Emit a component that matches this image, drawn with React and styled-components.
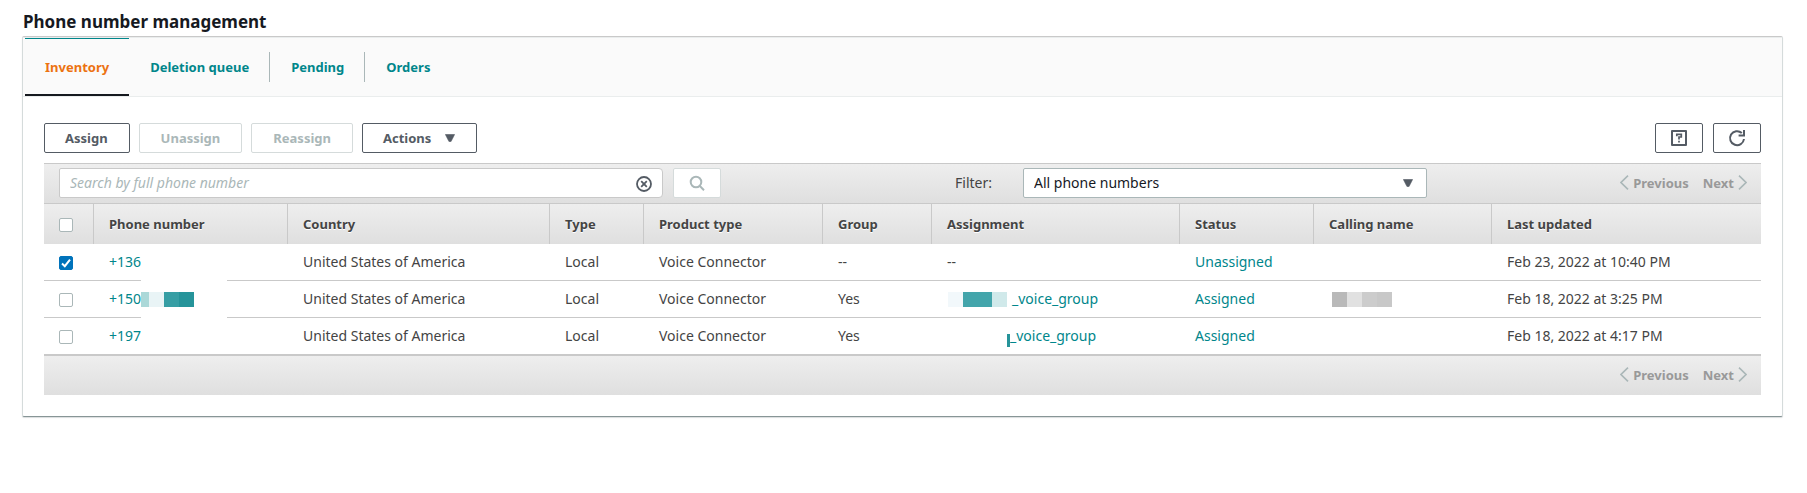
import React, { useState } from 'react';
import styled, { createGlobalStyle, css } from 'styled-components';

const color = {
  ink: '#16191f',
  text: '#444444',
  slate: '#545b64',
  teal: '#00868b',
  orange: '#ec7211',
  muted: '#aab7b8',
  faint: '#d5dbdb',
  line: '#c9c9c9',
  disabled: '#999999',
};

const GlobalStyle = createGlobalStyle`
  *, *::before, *::after { box-sizing: border-box; }
  body { margin: 0; background: #ffffff; }
  body, button, input, select {
    font-family: 'Noto Sans', 'Open Sans', sans-serif;
    font-size: 14px;
    line-height: 20px;
    color: ${color.text};
  }
`;

const Page = styled.main`
  padding: 10px 24px 40px 22px;
`;

const Title = styled.h1`
  margin: 0 0 2px;
  padding-left: 1px;
  font-size: 17px;
  line-height: 24px;
  font-weight: 700;
  color: ${color.ink};
`;

const Card = styled.section`
  border: 1px solid ${color.faint};
  border-top-color: ${color.line};
  border-bottom-color: #879596;
  box-shadow: 0 1px 1px rgba(0, 28, 36, 0.15);
  border-radius: 2px;
`;

const TabBar = styled.nav`
  display: flex;
  height: 60px;
  padding-left: 2px;
  background: #fafafa;
  border-top: 1px solid #eaeded;
  border-bottom: 1px solid #eaeded;
`;

const Tab = styled.a`
  position: relative;
  display: flex;
  align-items: center;
  padding: 0 21px;
  font-size: 13px;
  font-weight: 700;
  text-decoration: none;
  color: ${color.teal};
  & + &::before {
    content: '';
    position: absolute;
    left: -1px;
    top: 14px;
    width: 1px;
    height: 30px;
    background: ${color.muted};
  }
  ${(p) =>
    p.$active &&
    css`
      padding: 0 20px;
      color: ${color.orange};
      border-top: 1px solid ${color.teal};
      border-bottom: 2px solid ${color.ink};
    `}
`;

const Content = styled.div`
  padding: 26px 21px 21px;
`;

const ButtonRow = styled.div`
  display: flex;
  gap: 9px;
  margin-bottom: 10px;
`;

const Button = styled.button`
  display: inline-flex;
  align-items: center;
  justify-content: center;
  height: 30px;
  padding: 0 21px 0 20px;
  font-size: 13px;
  font-weight: 700;
  color: ${color.slate};
  background: #ffffff;
  border: 1px solid ${color.slate};
  border-radius: 2px;
  &:disabled {
    padding: 0 21px;
    color: ${color.muted};
    border-color: ${color.faint};
  }
  svg { margin-left: 14px; }
`;

const IconButton = styled(Button)`
  flex: none;
  width: 48px;
  &, &:disabled { padding: 0; }
  svg { margin: 0; }
`;

const RightButtons = styled.div`
  display: flex;
  gap: 10px;
  margin-left: auto;
`;

const bar = css`
  background: linear-gradient(#eeeeee, #dfdfdf);
`;

const Toolbar = styled.div`
  ${bar}
  display: flex;
  align-items: center;
  height: 40px;
  padding: 0 14px 2px 15px;
  border-top: 1px solid ${color.line};
`;

const Search = styled.form`
  display: flex;
  gap: 10px;
  flex: 0 1 662px;
`;

const SearchField = styled.div`
  position: relative;
  flex: 1;
`;

const SearchInput = styled.input`
  width: 100%;
  height: 30px;
  padding: 0 36px 0 10px;
  background: #ffffff;
  border: 1px solid ${color.line};
  border-radius: 2px 4px 4px 2px;
  &::placeholder {
    font-style: italic;
    color: ${color.muted};
    opacity: 1;
  }
`;

const ClearButton = styled.button`
  position: absolute;
  right: 11px;
  top: 8px;
  display: flex;
  padding: 0;
  border: 0;
  background: none;
`;

const Filter = styled.div`
  display: flex;
  align-items: center;
  flex: 0 1 472px;
  margin: 0 24px 0 234px;
`;

const FilterLabel = styled.label`
  flex: none;
  width: 68px;
`;

const SelectBox = styled.div`
  position: relative;
  flex: 1;
  svg {
    position: absolute;
    right: 14px;
    top: 11px;
    pointer-events: none;
  }
`;

const Select = styled.select`
  appearance: none;
  width: 100%;
  height: 30px;
  padding: 0 36px 0 10px;
  color: ${color.ink};
  background: #ffffff;
  border: 1px solid ${color.muted};
  border-radius: 2px;
`;

const PagerGroup = styled.div`
  display: flex;
  gap: 14px;
  margin-left: auto;
`;

const PagerButton = styled.button`
  display: flex;
  align-items: center;
  gap: 4px;
  padding: 0;
  border: 0;
  background: none;
  font-size: 13px;
  font-weight: 700;
  color: ${color.disabled};
`;

const Table = styled.table`
  width: 100%;
  table-layout: fixed;
  border-collapse: separate;
  border-spacing: 0;
`;

const Col = styled.col`
  width: ${(p) => (p.$width ? `${p.$width}px` : 'auto')};
`;

const HeadCell = styled.th`
  ${bar}
  height: 41px;
  padding: 0 0 0 15px;
  border-top: 1px solid ${color.line};
  border-right: 1px solid ${color.line};
  font-size: 13px;
  font-weight: 700;
  text-align: left;
  text-shadow: 0 1px 0 #ffffff;
  white-space: nowrap;
  &:last-child { border-right: 0; }
`;

const Cell = styled.td`
  position: relative;
  height: 37px;
  padding: 0 0 0 15px;
  border-bottom: 1px solid ${color.line};
  white-space: nowrap;
`;

const Checkbox = styled.input`
  appearance: none;
  display: block;
  width: 14px;
  height: 14px;
  margin: 2px 0 0;
  background: #ffffff;
  border: 1px solid ${color.muted};
  border-radius: 2px;
  &:checked {
    border-color: #0073bb;
    background: #0073bb
      url("data:image/svg+xml,%3Csvg xmlns='http://www.w3.org/2000/svg' viewBox='0 0 12 12'%3E%3Cpath d='M2 6.5 4.8 9.2 10 2.6' fill='none' stroke='white' stroke-width='2'/%3E%3C/svg%3E")
      center / 12px 12px no-repeat;
  }
`;

const Link = styled.a`
  color: ${color.teal};
  text-decoration: none;
`;

const Mask = styled.span`
  position: absolute;
  left: 47px;
  top: 0;
  bottom: -1px;
  display: flex;
  align-items: center;
  width: 86px;
  background: #ffffff;
`;

const GroupCell = styled.div`
  display: flex;
  align-items: center;
`;

const GroupMosaic = styled.span`
  display: flex;
  justify-content: ${(p) => (p.$end ? 'flex-end' : 'flex-start')};
  width: ${(p) => (p.$end ? 63 : 65)}px;
  padding-left: 1px;
`;

const NameMosaic = styled.span`
  display: flex;
  padding-left: 3px;
`;

const Block = styled.span`
  width: ${(p) => p.$width || 15}px;
  height: 15px;
  background: ${(p) => p.$color};
`;

const Fragment = styled.span`
  width: 3px;
  height: 13px;
  margin-top: 9px;
  background: #26949a;
`;

const TableFooter = styled.div`
  ${bar}
  display: flex;
  align-items: center;
  height: 40px;
  padding: 0 14px 2px 15px;
  border-top: 1px solid ${color.line};
`;

const Caret = () => (
  <svg width="10" height="8" viewBox="0 0 10 8" aria-hidden="true">
    <path d="M0.4 0.5h9.2L6 7.6H4z" fill={color.slate} stroke={color.slate} strokeWidth="0.6" strokeLinejoin="round" />
  </svg>
);

const ClearIcon = () => (
  <svg width="16" height="16" viewBox="0 0 16 16" fill="none" stroke={color.slate} strokeWidth="1.8" aria-hidden="true">
    <circle cx="8" cy="8" r="7" />
    <path d="m5.2 5.2 5.6 5.6M10.8 5.2l-5.6 5.6" />
  </svg>
);

const SearchIcon = () => (
  <svg width="16" height="16" viewBox="0 0 16 16" fill="none" stroke={color.muted} strokeWidth="2" aria-hidden="true">
    <circle cx="7" cy="7" r="5.3" />
    <path d="m10.6 10.8 4.4 4.4" />
  </svg>
);

const HelpIcon = () => (
  <svg width="16" height="16" viewBox="0 0 16 16" fill="none" stroke={color.slate} strokeWidth="2" aria-hidden="true">
    <path d="M1 1h14v14H1z" strokeLinejoin="round" />
    <path d="M5.8 6.2V4.3h4.5V7H8v2.4M8 10.7v1.8" strokeWidth="1.7" />
  </svg>
);

const RefreshIcon = () => (
  <svg width="18" height="18" viewBox="0 0 18 18" fill="none" stroke={color.slate} strokeWidth="2" aria-hidden="true">
    <path d="M16 10a7 7 0 1 1-2.2-6" />
    <path d="M16 1v5.6h-5.4" />
  </svg>
);

const Chevron = ({ next }) => (
  <svg width="9" height="16" viewBox="0 0 9 16" fill="none" stroke={color.muted} strokeWidth="1.6" aria-hidden="true">
    <path d={next ? 'M1 0.6 8 7.5 1 14.4' : 'M8 0.6 1 7.5 8 14.4'} />
  </svg>
);

const Pager = () => (
  <PagerGroup>
    <PagerButton type="button" disabled>
      <Chevron />
      Previous
    </PagerButton>
    <PagerButton type="button" disabled>
      Next
      <Chevron next />
    </PagerButton>
  </PagerGroup>
);

const tabs = ['Inventory', 'Deletion queue', 'Pending', 'Orders'];

const columns = [
  { label: 'Phone number', width: 194 },
  { label: 'Country', width: 262 },
  { label: 'Type', width: 94 },
  { label: 'Product type', width: 179 },
  { label: 'Group', width: 109 },
  { label: 'Assignment', width: 248 },
  { label: 'Status', width: 134 },
  { label: 'Calling name', width: 178 },
  { label: 'Last updated' },
];

const rows = [
  {
    phone: '+136',
    group: '--',
    status: 'Unassigned',
    updated: 'Feb 23, 2022 at 10:40 PM',
  },
  {
    phone: '+150',
    phoneBlocks: [['#abd8d8', 8], ['#e9f4f6', 15], ['#369ea4', 15], ['#26949a', 15]],
    group: 'Yes',
    assignment: '_voice_group',
    groupBlocks: [['#f2f8fb', 15], ['#43a5ab', 29], ['#d0e9ea', 15]],
    status: 'Assigned',
    nameBlocks: [['#b9b9b9', 15], ['#e1e1e1', 15], ['#cccccc', 15], ['#c8c8c8', 15]],
    updated: 'Feb 18, 2022 at 3:25 PM',
  },
  {
    phone: '+197',
    group: 'Yes',
    assignment: '_voice_group',
    status: 'Assigned',
    updated: 'Feb 18, 2022 at 4:17 PM',
  },
];

const Blocks = ({ items = [] }) =>
  items.map(([fill, width], i) => <Block key={i} $color={fill} $width={width} />);

export default function App() {
  const [selected, setSelected] = useState({ '+136': true });
  const toggle = (phone) => setSelected((s) => ({ ...s, [phone]: !s[phone] }));

  return (
    <Page>
      <GlobalStyle />
      <Title>Phone number management</Title>
      <Card>
        <TabBar>
          {tabs.map((tab, i) => (
            <Tab key={tab} href="#" $active={i === 0}>
              {tab}
            </Tab>
          ))}
        </TabBar>
        <Content>
          <ButtonRow>
            <Button type="button">Assign</Button>
            <Button type="button" disabled>Unassign</Button>
            <Button type="button" disabled>Reassign</Button>
            <Button type="button">
              Actions
              <Caret />
            </Button>
            <RightButtons>
              <IconButton type="button" aria-label="Help">
                <HelpIcon />
              </IconButton>
              <IconButton type="button" aria-label="Refresh">
                <RefreshIcon />
              </IconButton>
            </RightButtons>
          </ButtonRow>

          <Toolbar>
            <Search onSubmit={(e) => e.preventDefault()}>
              <SearchField>
                <SearchInput aria-label="Search by full phone number" placeholder="Search by full phone number" />
                <ClearButton type="reset" aria-label="Clear search">
                  <ClearIcon />
                </ClearButton>
              </SearchField>
              <IconButton type="submit" aria-label="Search" disabled>
                <SearchIcon />
              </IconButton>
            </Search>
            <Filter>
              <FilterLabel htmlFor="filter">Filter:</FilterLabel>
              <SelectBox>
                <Select id="filter">
                  <option>All phone numbers</option>
                </Select>
                <Caret />
              </SelectBox>
            </Filter>
            <Pager />
          </Toolbar>

          <Table>
            <colgroup>
              <Col $width={50} />
              {columns.map((c) => (
                <Col key={c.label} $width={c.width} />
              ))}
            </colgroup>
            <thead>
              <tr>
                <HeadCell>
                  <Checkbox type="checkbox" aria-label="Select all" />
                </HeadCell>
                {columns.map((c) => (
                  <HeadCell key={c.label}>{c.label}</HeadCell>
                ))}
              </tr>
            </thead>
            <tbody>
              {rows.map((row) => (
                <tr key={row.phone}>
                  <Cell>
                    <Checkbox
                      type="checkbox"
                      aria-label={`Select ${row.phone}`}
                      checked={!!selected[row.phone]}
                      onChange={() => toggle(row.phone)}
                    />
                  </Cell>
                  <Cell>
                    <Link href="#">{row.phone}</Link>
                    {row.phone !== '+197' && (
                      <Mask>
                        <Blocks items={row.phoneBlocks} />
                      </Mask>
                    )}
                  </Cell>
                  <Cell>United States of America</Cell>
                  <Cell>Local</Cell>
                  <Cell>Voice Connector</Cell>
                  <Cell>{row.group}</Cell>
                  <Cell>
                    {row.assignment ? (
                      <GroupCell>
                        <GroupMosaic $end={!row.groupBlocks}>
                          {row.groupBlocks ? <Blocks items={row.groupBlocks} /> : <Fragment />}
                        </GroupMosaic>
                        <Link href="#">{row.assignment}</Link>
                      </GroupCell>
                    ) : (
                      '--'
                    )}
                  </Cell>
                  <Cell>
                    <Link href="#">{row.status}</Link>
                  </Cell>
                  <Cell>
                    {row.nameBlocks && (
                      <NameMosaic>
                        <Blocks items={row.nameBlocks} />
                      </NameMosaic>
                    )}
                  </Cell>
                  <Cell>{row.updated}</Cell>
                </tr>
              ))}
            </tbody>
          </Table>
          <TableFooter>
            <Pager />
          </TableFooter>
        </Content>
      </Card>
    </Page>
  );
}
